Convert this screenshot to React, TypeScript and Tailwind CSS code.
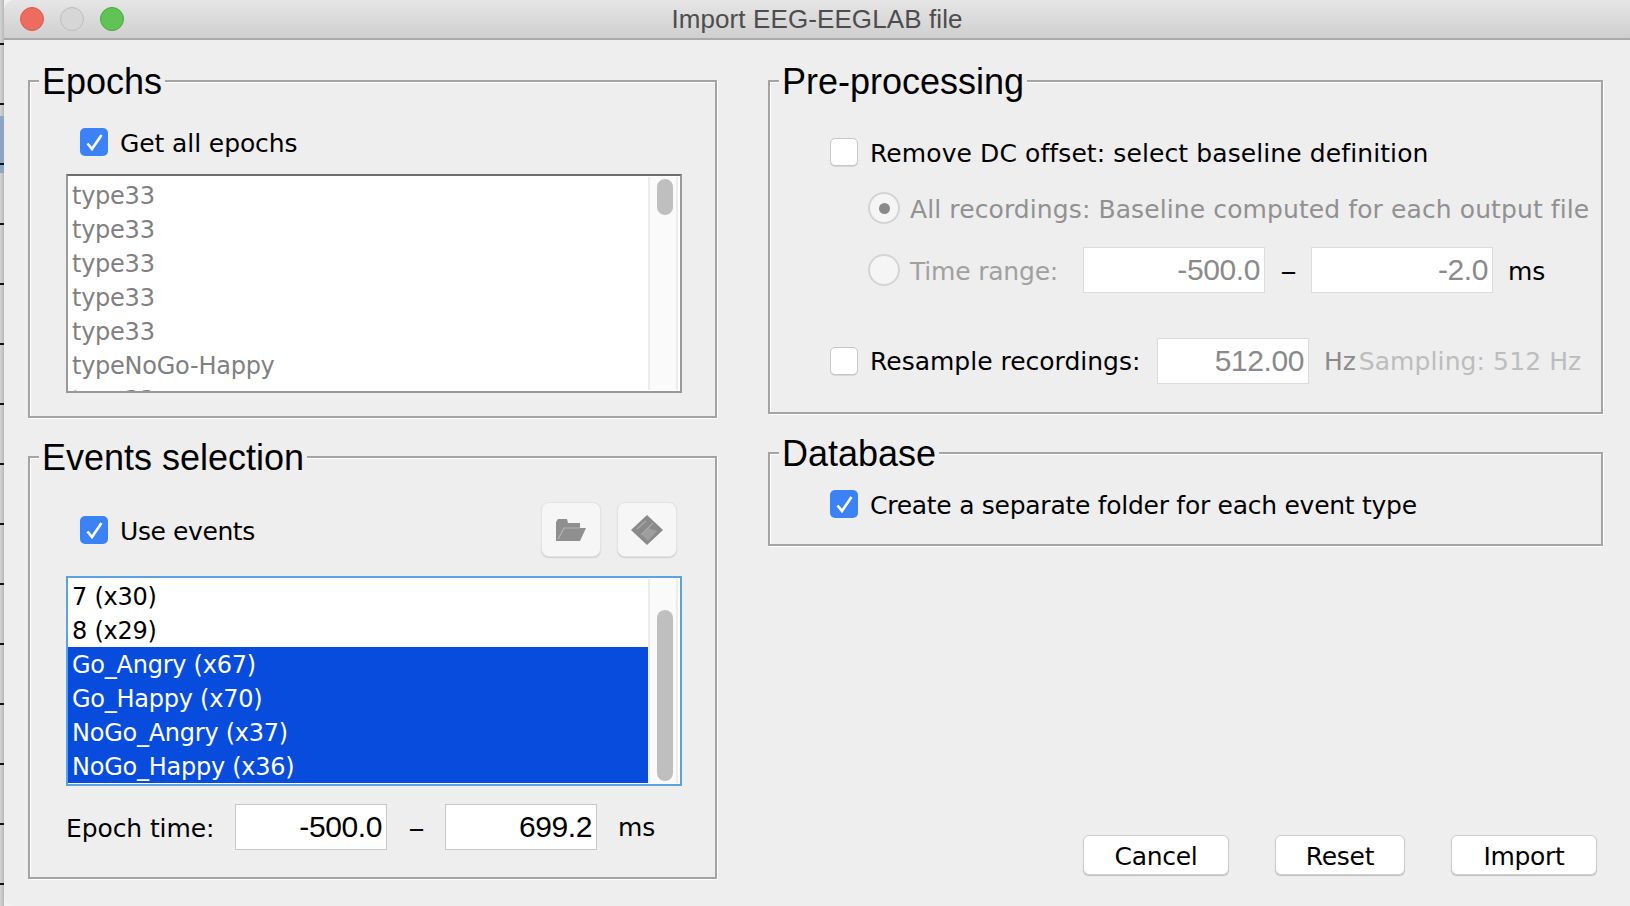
import React from 'react';

const TICKS = Array.from({ length: 15 }, (_, i) => i);

const Group = ({ title, className, children }: { title: string; className: string; children: React.ReactNode }) => (
  <div className={`relative border-2 border-[#a4a4a4] shadow-[inset_1px_1px_0_#ffffff,1px_1px_0_#ffffff] ${className}`}>
    <div className="absolute left-[9px] top-[-21px] bg-[#eeeeee] px-[3px] font-['Liberation_Sans',sans-serif] text-[36px] leading-[42px] tracking-normal text-black">
      {title}
    </div>
    {children}
  </div>
);

const CheckBox = ({ checked }: { checked?: boolean }) =>
  checked ? (
    <div className="flex h-[28px] w-[28px] shrink-0 items-center justify-center rounded-[5px] bg-[#3b82f7]">
      <svg width="28" height="28" viewBox="0 0 28 28" fill="none">
        <path d="M7.5 15.5 L12 21 L21.5 7" stroke="#ffffff" strokeWidth="2.6" />
      </svg>
    </div>
  ) : (
    <div className="h-[28px] w-[28px] shrink-0 rounded-[5px] border border-[#c6c6c6] bg-white shadow-[0_1px_0_#d8d8d8]" />
  );

const Radio = ({ selected }: { selected?: boolean }) => (
  <div className="flex h-[32px] w-[32px] shrink-0 items-center justify-center rounded-full border-2 border-[#d4d4d4] bg-[#f5f5f5]">
    {selected && <div className="h-[11px] w-[11px] rounded-full bg-[#8a8a8a]" />}
  </div>
);

const NumberField = ({ value, className }: { value: string; className: string }) => (
  <div className={`flex h-[46px] shrink-0 items-center justify-end bg-white pr-[4px] font-['Liberation_Sans',sans-serif] text-[30px] tracking-[-0.4px] ${className}`}>
    {value}
  </div>
);

const Dash = ({ className }: { className: string }) => (
  <span className={`translate-y-[2px] text-center ${className}`}>
    <span className="inline-block scale-x-[2]">-</span>
  </span>
);

const ListRow = ({ label, selected, muted }: { label: string; selected?: boolean; muted?: boolean }) => (
  <div
    className={`h-[34px] shrink-0 pl-[4px] text-[24px] leading-[37px] tracking-[-0.25px] whitespace-nowrap ${
      selected ? 'bg-[#074cdc] text-white' : muted ? 'text-[#808080]' : 'text-black'
    }`}
  >
    {label}
  </div>
);

const ListBox = ({ className, children, thumbClass, padClass }: { className: string; children: React.ReactNode; thumbClass: string; padClass: string }) => (
  <div className={`ml-[36px] flex w-[616px] overflow-hidden border-2 bg-white ${className}`}>
    <div className={`flex min-w-0 flex-1 flex-col overflow-hidden ${padClass}`}>{children}</div>
    <div className="my-[1px] mr-[2px] w-[30px] shrink-0 border-x-2 border-[#ececec] bg-[#fafafa]">
      <div className={`ml-[7px] w-[16px] rounded-full bg-[#bfbfbf] ${thumbClass}`} />
    </div>
  </div>
);

const IconButton = ({ children }: { children: React.ReactNode }) => (
  <div className="flex h-[55px] w-[60px] items-center justify-center rounded-[8px] border border-[#e2e2e2] bg-[#f6f6f6] shadow-[0_1px_1px_#cfcfcf]">
    {children}
  </div>
);

const PushButton = ({ label, className }: { label: string; className: string }) => (
  <div className={`flex h-[40px] items-center justify-center rounded-[6px] border border-[#cdcdcd] bg-white pt-[3px] tracking-[-0.3px] text-black shadow-[0_1px_1px_#bdbdbd] ${className}`}>
    {label}
  </div>
);

const App = () => (
  <div className="flex h-[906px] w-[1630px] overflow-hidden bg-[#f2f2f2] font-['DejaVu_Sans',sans-serif] text-[25px] leading-[28px] tracking-[-0.1px] text-black">
    {/* sliver of the window behind */}
    <div className="relative w-[4px] shrink-0 bg-gradient-to-r from-[#d4d4d4] to-[#b8b8b8] pt-[43px]">
      <div className="absolute left-0 top-[116px] h-[57px] w-full bg-[#8ea5c2]" />
      {TICKS.map((t) => (
        <div key={t} className="relative h-[60px] border-t-2 border-[#111111]" />
      ))}
    </div>

    <div className="flex min-w-0 flex-1 flex-col overflow-hidden rounded-[10px] rounded-r-none bg-[#eeeeee]">
      <div className="grid h-[40px] shrink-0 grid-cols-[1fr_auto_1fr] items-center border-b-2 border-[#a9a9a9] bg-gradient-to-b from-[#e6e6e6] to-[#cfcfcf]">
        <div className="flex gap-[16px] pl-[16px]">
          <div className="h-[24px] w-[24px] rounded-full border border-[#dc5a50] bg-[#ee6b60]" />
          <div className="h-[24px] w-[24px] rounded-full border border-[#bdbdbd] bg-[#d6d6d6]" />
          <div className="h-[24px] w-[24px] rounded-full border border-[#4ba640] bg-[#60c454]" />
        </div>
        <div className="font-['Liberation_Sans',sans-serif] text-[26px] tracking-[0.1px] text-[#4d4d4d]">Import EEG-EEGLAB file</div>
        <div />
      </div>

      <div className="flex min-h-0 flex-1 pl-[24px]">
        {/* left column */}
        <div className="w-[689px] shrink-0 pt-[40px]">
          <Group title="Epochs" className="h-[338px]">
            <div className="flex items-center gap-[12px] pl-[50px] pt-[46px]">
              <CheckBox checked />
              <span className="translate-y-[2px]">Get all epochs</span>
            </div>
            <ListBox className="mt-[18px] h-[219px] border-[#999999] border-t-[#6e6e6e]" thumbClass="mt-[2px] h-[36px]" padClass="pt-[2px]">
              {['type33', 'type33', 'type33', 'type33', 'type33', 'typeNoGo-Happy', 'type33'].map((label, i) => (
                <ListRow key={i} label={label} muted />
              ))}
            </ListBox>
          </Group>

          <Group title="Events selection" className="mt-[38px] h-[423px]">
            <div className="flex items-center pl-[50px] pr-[38px] pt-[44px]">
              <CheckBox checked />
              <span className="ml-[12px] flex-1 translate-y-[2px] tracking-[-0.4px]">Use events</span>
              <div className="flex gap-[16px]">
                <IconButton>
                  <svg width="30" height="22" viewBox="0 0 30 22">
                    <path d="M0 3 L2 0 L11 0 L12 4 L24 4 L24 9 L30 9 L24 22 L0 22 Z" fill="#8f8f8f" />
                    <path d="M2 20 L8 9 L24 9" fill="none" stroke="#b4b4b4" strokeWidth="1.2" />
                  </svg>
                </IconButton>
                <IconButton>
                  <svg width="32" height="30" viewBox="0 0 32 30">
                    <path d="M16 0 L32 15 L16 30 L0 15 Z" fill="#8a8a8a" />
                    <path d="M17 13 L26 16 L17 26 L11 20 Z" fill="#9e9e9e" />
                    <path d="M6 14 L15 6 M10 20 L22 8" fill="none" stroke="#a8a8a8" strokeWidth="1.4" />
                  </svg>
                </IconButton>
              </div>
            </div>
            <ListBox className="mt-[19px] h-[210px] border-[#5aa3e0]" thumbClass="mt-[31px] h-[171px]" padClass="pt-[1px]">
              <ListRow label="7 (x30)" />
              <ListRow label="8 (x29)" />
              <ListRow label="Go_Angry (x67)" selected />
              <ListRow label="Go_Happy (x70)" selected />
              <ListRow label="NoGo_Angry (x37)" selected />
              <ListRow label="NoGo_Happy (x36)" selected />
            </ListBox>
            <div className="ml-[36px] mt-[18px] flex items-center">
              <span className="w-[169px] shrink-0 translate-y-[2px]">Epoch time:</span>
              <NumberField value="-500.0" className="w-[152px] border border-[#c9c9c9] text-black" />
              <Dash className="w-[58px]" />
              <NumberField value="699.2" className="w-[152px] border border-[#c9c9c9] text-black" />
              <span className="ml-[21px] translate-y-[1px]">ms</span>
            </div>
          </Group>
        </div>

        {/* right column */}
        <div className="ml-[51px] flex w-[835px] shrink-0 flex-col pb-[31px] pt-[40px]">
          <Group title="Pre-processing" className="h-[334px]">
            <div className="flex items-center gap-[12px] pl-[60px] pt-[56px]">
              <CheckBox />
              <span className="translate-y-[2px] tracking-[0.1px]">Remove DC offset: select baseline definition</span>
            </div>
            <div className="mt-[26px] flex items-center gap-[10px] pl-[98px]">
              <Radio selected />
              <span className="translate-y-[2px] whitespace-nowrap tracking-[0.1px] text-[#919191]">All recordings: Baseline computed for each output file</span>
            </div>
            <div className="mt-[23px] flex items-center pl-[98px]">
              <Radio />
              <span className="ml-[10px] w-[173px] shrink-0 translate-y-[2px] tracking-[-0.2px] text-[#a0a0a0]">Time range:</span>
              <NumberField value="-500.0" className="w-[182px] border border-[#dcdcdc] text-[#8a8a8a]" />
              <Dash className="w-[46px]" />
              <NumberField value="-2.0" className="w-[182px] border border-[#dcdcdc] text-[#8a8a8a]" />
              <span className="ml-[15px] translate-y-[2px]">ms</span>
            </div>
            <div className="mt-[45px] flex items-center pl-[60px]">
              <CheckBox />
              <span className="ml-[12px] w-[287px] shrink-0 translate-y-[1px] tracking-normal">Resample recordings:</span>
              <NumberField value="512.00" className="w-[152px] border border-[#dcdcdc] text-[#8a8a8a]" />
              <span className="ml-[15px] translate-y-[1px] text-[#8a8a8a]">Hz</span>
              <span className="ml-[3px] translate-y-[1px] whitespace-nowrap tracking-[0.1px] text-[#bdbdbd]">Sampling: 512 Hz</span>
            </div>
          </Group>

          <Group title="Database" className="mt-[38px] h-[94px]">
            <div className="flex items-center gap-[12px] pl-[60px] pt-[36px]">
              <CheckBox checked />
              <span className="translate-y-[2px] tracking-[-0.27px]">Create a separate folder for each event type</span>
            </div>
          </Group>

          <div className="mt-auto flex justify-end gap-[46px] pr-[6px]">
            <PushButton label="Cancel" className="w-[146px]" />
            <PushButton label="Reset" className="w-[130px]" />
            <PushButton label="Import" className="w-[146px]" />
          </div>
        </div>
      </div>
    </div>
  </div>
);

export default App;
